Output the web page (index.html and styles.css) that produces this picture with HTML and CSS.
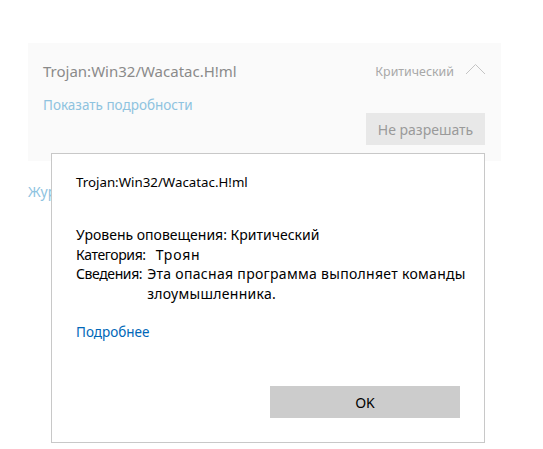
FILE: index.html
```html
<!DOCTYPE html>
<html lang="ru">
<head>
<meta charset="utf-8">
<link rel="stylesheet" href="styles.css">
</head>
<body>
<div class="page">
  <div class="card">
    <div class="card-head">
      <span class="threat-name">Trojan:Win32/Wacatac.H!ml</span>
      <span class="level">Критический</span>
      <svg class="chevron" width="21" height="12" viewBox="0 0 21 12"><path d="M1 11 L10.5 1.5 L20 11" fill="none" stroke="#c4c4c4" stroke-width="1"/></svg>
    </div>
    <a class="show-details">Показать подробности</a>
    <div class="card-actions">
      <button class="deny">Не разрешать</button>
    </div>
  </div>
  <a class="journal">Журнал защиты</a>
</div>

<div class="dialog">
  <div class="dlg-title">Trojan:Win32/Wacatac.H!ml</div>
  <div class="dlg-info">
    <div class="row">Уровень оповещения: Критический</div>
    <div class="row"><span class="lbl">Категория:</span><span class="val val-cat">Троян</span></div>
    <div class="row"><span class="lbl">Сведения:</span><span class="val val-desc">Эта опасная программа выполняет команды злоумышленника.</span></div>
  </div>
  <a class="more">Подробнее</a>
  <div class="dlg-actions">
    <button class="ok">OK</button>
  </div>
</div>
</body>
</html>
```
FILE: styles.css
```css
html, body {
  margin: 0;
  padding: 0;
  background: #ffffff;
  font-family: "Noto Sans", "Open Sans", sans-serif;
}
.page {
  padding: 43px 0 0 28px;
  display: flex;
  flex-direction: column;
  align-items: flex-start;
}
.card {
  width: 473px;
  height: 118px;
  box-sizing: border-box;
  background: #fafafa;
  padding: 17px 15px 0 15px;
  display: flex;
  flex-direction: column;
}
.card-head {
  display: flex;
  align-items: center;
  height: 22px;
}
.threat-name {
  font-size: 15px;
  color: #8a8a8a;
  flex: 1;
}
.level {
  font-size: 12.4px;
  color: #a8a8a8;
  margin-right: 11px;
}
.chevron {
  display: block;
  margin-top: -5px;
}
.show-details {
  font-size: 13.5px;
  color: #8ec3df;
  margin-top: 14px;
  line-height: 18px;
}
.card-actions {
  display: flex;
  justify-content: flex-end;
  margin-top: -1px;
  margin-right: 1px;
}
.deny {
  width: 119px;
  height: 32px;
  border: none;
  background: #e8e8e8;
  color: #9a9a9a;
  font-family: inherit;
  font-size: 14px;
  padding: 0;
}
.journal {
  font-size: 14px;
  color: #8ec3df;
  margin-top: 21px;
}
.dialog {
  position: absolute;
  left: 51px;
  top: 153px;
  width: 434px;
  height: 290px;
  box-sizing: border-box;
  border: 1px solid #c8c8c8;
  background: #ffffff;
  padding: 19px 0 0 24px;
  display: flex;
  flex-direction: column;
  color: #000;
  font-size: 14px;
}
.dlg-title {
  font-size: 13.3px;
  line-height: 19px;
}
.dlg-info {
  margin-top: 33px;
  display: flex;
  flex-direction: column;
}
.row {
  display: flex;
  line-height: 19.5px;
}
.lbl {
  white-space: nowrap;
  letter-spacing: -0.4px;
}
.val-cat {
  margin-left: 10px;
  letter-spacing: 0.8px;
}
.val-desc {
  margin-left: 5px;
  width: 340px;
  letter-spacing: 0.3px;
}
.more {
  margin-top: 20px;
  color: #0067b8;
  font-size: 13.5px;
}
.dlg-actions {
  margin-top: auto;
  margin-bottom: 24px;
  display: flex;
  justify-content: flex-end;
  padding-right: 24px;
}
.ok {
  width: 190px;
  height: 32px;
  border: none;
  background: #cccccc;
  font-family: inherit;
  font-size: 14px;
  color: #000;
  padding: 0;
}
```
